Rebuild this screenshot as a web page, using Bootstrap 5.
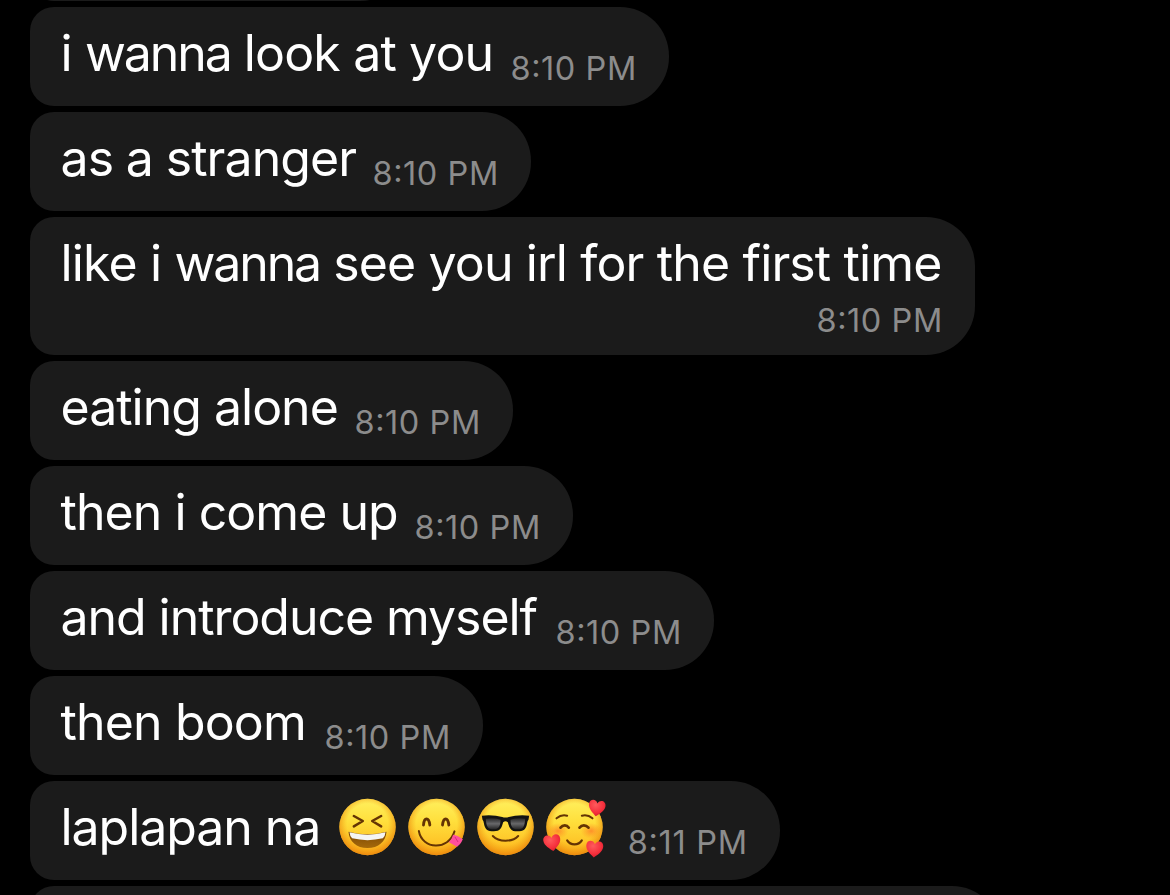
<!DOCTYPE html>
<html lang="en">
<head>
<meta charset="utf-8">
<meta name="viewport" content="width=device-width, initial-scale=1">
<title>Chat</title>
<link href="https://cdn.jsdelivr.net/npm/bootstrap@5.3.0/dist/css/bootstrap.min.css" rel="stylesheet">
<style>
html,body{height:100%;overflow:hidden}
body{background:#000;color:#fff;font-family:Inter,"Liberation Sans",sans-serif}
.thread{gap:6px;padding-left:30px;height:100vh;justify-content:flex-start}
.bubble{background:#1b1b1b;height:99px;border-radius:24px 49px 49px 24px;padding:0 32.2px 0 30.5px;flex:none;white-space:nowrap}
.bubble.tall{height:138px}
.msg{font-size:50px;line-height:60px;padding-top:16px;letter-spacing:-1px}
.wn{letter-spacing:-2.1px}
.time{font-size:32.5px;line-height:40px;padding-top:42px;color:#8c8c8c;letter-spacing:.55px;font-feature-settings:"case" 1}
.tall .time{padding-top:8px}
.b0{width:379px;margin-top:-98px}
.b1{width:639px}.b1 .msg{letter-spacing:-.85px}
.b1 .msg .wn,.b3 .msg .wn{letter-spacing:-2.1px}
.b2{width:501px}.b2 .msg{letter-spacing:-.9px;word-spacing:-.5px}
.b3{width:945px}.b3 .msg{letter-spacing:-.86px}
.b4{width:483px}
.b5{width:543px}.b5 .msg{letter-spacing:-.95px}
.b6{width:684px}.b6 .msg{letter-spacing:-1.05px}
.b7{width:453px}.b7 .msg{letter-spacing:-.85px}
.b8{width:750px}.b8 .msg{width:272.4px;letter-spacing:-1.05px}
.b8 .time{letter-spacing:.7px}
.b9{width:971px;height:9px;overflow:hidden;background:none;border-radius:0;padding:0}
.b9::before{content:"";display:block;height:99px;background:#1b1b1b;border-radius:24px 49px 49px 24px}
.emoji{width:69px;height:64px;flex:none;margin-top:13.7px}
.ink{fill:none;stroke:#643404;stroke-linecap:round;stroke-linejoin:round}
</style>
</head>
<body>
<svg class="position-absolute" width="0" height="0" aria-hidden="true">
<defs>
<linearGradient id="face" x1="0" y1="0" x2="0" y2="1"><stop offset="0" stop-color="#fff05e"/><stop offset=".4" stop-color="#ffdf3c"/><stop offset="1" stop-color="#fdb51c"/></linearGradient>
<radialGradient id="rim" cx=".5" cy=".45" r=".55"><stop offset=".66" stop-color="#f19a12" stop-opacity="0"/><stop offset="1" stop-color="#ea820c" stop-opacity=".85"/></radialGradient>
<radialGradient id="blush"><stop offset="0" stop-color="#ff7326" stop-opacity=".7"/><stop offset="1" stop-color="#ff8a20" stop-opacity="0"/></radialGradient>
<linearGradient id="lens" x1="0" y1="0" x2="0" y2="1"><stop offset="0" stop-color="#262626"/><stop offset=".5" stop-color="#68686a"/><stop offset="1" stop-color="#252525"/></linearGradient>
<linearGradient id="mouth" x1="0" y1="0" x2="0" y2="1"><stop offset="0" stop-color="#7b4705"/><stop offset="1" stop-color="#a5690a"/></linearGradient>
<radialGradient id="love" cx=".4" cy=".3" r=".75"><stop offset="0" stop-color="#ff5a5c"/><stop offset=".65" stop-color="#f52f3c"/><stop offset="1" stop-color="#cf1c2c"/></radialGradient>
<g id="head"><circle r="84.5" fill="url(#face)"/><circle r="84.5" fill="url(#rim)"/></g>
<path id="heart" d="M0 25C-9 17-25 6-25-9C-25-25-6-28 0-14C6-28 25-25 25-9C25 6 9 17 0 25Z" fill="url(#love)"/>
</defs>
</svg>
<main class="thread d-flex flex-column align-items-start overflow-hidden">
<div class="bubble b0"></div>
<div class="bubble b1 d-flex justify-content-between align-items-start"><span class="msg">i <span class="wn">wanna</span> look at you</span><span class="time">8:10 PM</span></div>
<div class="bubble b2 d-flex justify-content-between align-items-start"><span class="msg">as a stranger</span><span class="time">8:10 PM</span></div>
<div class="bubble b3 tall d-flex flex-column"><span class="msg">like i <span class="wn">wanna</span> see you irl for the first time</span><span class="time text-end">8:10 PM</span></div>
<div class="bubble b4 d-flex justify-content-between align-items-start"><span class="msg">eating alone</span><span class="time">8:10 PM</span></div>
<div class="bubble b5 d-flex justify-content-between align-items-start"><span class="msg">then i come up</span><span class="time">8:10 PM</span></div>
<div class="bubble b6 d-flex justify-content-between align-items-start"><span class="msg">and introduce myself</span><span class="time">8:10 PM</span></div>
<div class="bubble b7 d-flex justify-content-between align-items-start"><span class="msg">then boom</span><span class="time">8:10 PM</span></div>
<div class="bubble b8 d-flex justify-content-between align-items-start">
<div class="d-flex align-items-start"><span class="msg">laplapan na</span>
<svg class="emoji" viewBox="-103.5 -96 207 192" role="img" aria-label="laughing face"><use href="#head"/>
<path class="ink" stroke-width="7.5" d="M-41-33L-14-18L-41-2M41-33L14-18L41-2"/>
<path d="M-57 14Q0 29 57 14C55 43 33 63 0 63C-33 63-55 43-57 14Z" fill="url(#mouth)"/>
<path d="M-54 16Q0 30 54 16Q53 28 46 34Q0 45-46 34Q-53 28-54 16Z" fill="#f5f5f3"/></svg>
<svg class="emoji" viewBox="-103.5 -96 207 192" role="img" aria-label="face savoring food"><use href="#head"/>
<path class="ink" stroke-width="8.5" d="M-39-6C-37-30-23-30-20-6M18-6C21-30 34-30 37-6"/>
<path class="ink" stroke-width="6" d="M-53 12C-43 68 36 72 54 13"/>
<path d="M50 23Q62 24 79 37Q72 53 62 59Q48 52 37 46Q46 37 50 23Z" fill="#ff4f9c"/><path d="M56 31L64 44" stroke="#d92e7c" stroke-width="3" stroke-linecap="round"/></svg>
<svg class="emoji" viewBox="-103.5 -96 207 192" role="img" aria-label="face with sunglasses"><use href="#head"/>
<path d="M-71-34Q-35-37-10-30Q0-27 10-30Q35-37 71-34L69-22Q66-20 65-12C62 8 54 13 35 13C16 13 12 4 7-14Q0-20-7-14C-12 4-16 13-35 13C-54 13-62 8-65-12Q-66-20-69-22Z" fill="#131313"/>
<path d="M-59-25Q-36-29-15-22C-15-3-20 7-36 7C-54 7-58-4-59-25ZM59-25Q36-29 15-22C15-3 20 7 36 7C54 7 58-4 59-25Z" fill="url(#lens)"/>
<path class="ink" stroke-width="6" d="M-38 27C-20 46 20 46 38 27"/></svg>
<svg class="emoji" viewBox="-103.5 -96 207 192" role="img" aria-label="smiling face with hearts"><use href="#head"/>
<ellipse cx="-50" cy="12" rx="32" ry="24" fill="url(#blush)"/><ellipse cx="50" cy="12" rx="32" ry="24" fill="url(#blush)"/>
<path class="ink" stroke-width="6" d="M-54-26Q-39-39-22-34M22-34Q39-39 54-26"/>
<path class="ink" stroke-width="8" d="M-42 2C-35-7-23-7-17 2M15 2C22-7 34-7 42 2"/>
<path class="ink" stroke-width="6.5" d="M-22 40C-12 56 12 56 22 40"/>
<use href="#heart" transform="translate(67 -57) rotate(8)"/><use href="#heart" transform="translate(-67 47) rotate(-8) scale(1.02)"/><use href="#heart" transform="translate(60 66) rotate(5) scale(1.02)"/></svg>
</div><span class="time">8:11 PM</span></div>
<div class="bubble b9"></div>
</main>
</body>
</html>
